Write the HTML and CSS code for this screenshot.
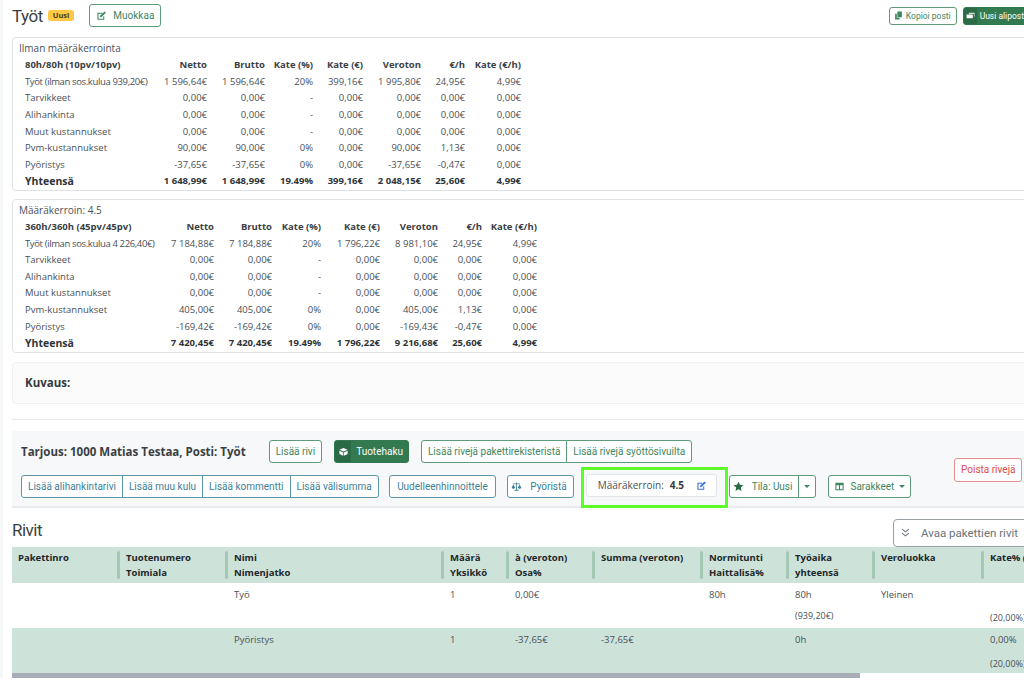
FILE: index.html
```html
<!DOCTYPE html>
<html lang="fi">
<head>
  <meta charset="UTF-8" />
  <title>Työt</title>
  <link rel="stylesheet" href="styles.css">
</head>
<body>
  <div class="page">
    <header class="post-head">
      <h1>Työt</h1>
      <span class="badge">Uusi</span>
      <button class="btn btn-green btn-edit">
        <svg class="ico" viewBox="0 0 16 16"><path d="M2 4h7v1.6H3.600v7h7V9H12v5H2z" fill="currentColor"/><path d="M6 8.200 12.400 2 14.400 4 8 10.200l-2.400.4z" fill="currentColor"/></svg>
        Muokkaa
      </button>
      <div class="head-right">
        <button class="btn btn-green btn-small">
          <svg class="ico-s" viewBox="0 0 16 16"><path d="M6 1h8v10H6z M2 5h3v7h5v3H2z" fill="currentColor"/></svg>
          Kopioi posti
        </button>
        <button class="btn btn-solid btn-small">
          <span class="ico-box box-small"><svg class="ico-s" viewBox="0 0 16 16"><path d="M5 3h10v7h-1V5H5z M1 6h11v7H1z" fill="currentColor"/></svg></span>
          Uusi aliposti
        </button>
      </div>
    </header>

    <section class="card">
      <div class="card-title">Ilman määräkerrointa</div>
      <table class="sum">
        <colgroup>
          <col class="w-130"><col class="w-58"><col class="w-58"><col class="w-48"><col class="w-50"><col class="w-58"><col class="w-44"><col class="w-56">
        </colgroup>
        <tr class="sum-head"><th>80h/80h (10pv/10pv)</th><th>Netto</th><th>Brutto</th><th>Kate (%)</th><th>Kate (€)</th><th>Veroton</th><th>€/h</th><th>Kate (€/h)</th></tr>
        <tr class="row-labor"><td>Työt (ilman sos.kulua 939,20€)</td><td>1 596,64€</td><td>1 596,64€</td><td>20%</td><td>399,16€</td><td>1 995,80€</td><td>24,95€</td><td>4,99€</td></tr>
        <tr><td>Tarvikkeet</td><td>0,00€</td><td>0,00€</td><td>-</td><td>0,00€</td><td>0,00€</td><td>0,00€</td><td>0,00€</td></tr>
        <tr><td>Alihankinta</td><td>0,00€</td><td>0,00€</td><td>-</td><td>0,00€</td><td>0,00€</td><td>0,00€</td><td>0,00€</td></tr>
        <tr><td>Muut kustannukset</td><td>0,00€</td><td>0,00€</td><td>-</td><td>0,00€</td><td>0,00€</td><td>0,00€</td><td>0,00€</td></tr>
        <tr><td>Pvm-kustannukset</td><td>90,00€</td><td>90,00€</td><td>0%</td><td>0,00€</td><td>90,00€</td><td>1,13€</td><td>0,00€</td></tr>
        <tr><td>Pyöristys</td><td>-37,65€</td><td>-37,65€</td><td>0%</td><td>0,00€</td><td>-37,65€</td><td>-0,47€</td><td>0,00€</td></tr>
        <tr class="sum-total"><td>Yhteensä</td><td>1 648,99€</td><td>1 648,99€</td><td>19.49%</td><td>399,16€</td><td>2 048,15€</td><td>25,60€</td><td>4,99€</td></tr>
      </table>
    </section>

    <section class="card">
      <div class="card-title">Määräkerroin: 4.5</div>
      <table class="sum">
        <colgroup>
          <col class="w-137"><col class="w-58"><col class="w-58"><col class="w-49"><col class="w-59"><col class="w-58"><col class="w-44"><col class="w-55">
        </colgroup>
        <tr class="sum-head"><th>360h/360h (45pv/45pv)</th><th>Netto</th><th>Brutto</th><th>Kate (%)</th><th>Kate (€)</th><th>Veroton</th><th>€/h</th><th>Kate (€/h)</th></tr>
        <tr class="row-labor"><td>Työt (ilman sos.kulua 4 226,40€)</td><td>7 184,88€</td><td>7 184,88€</td><td>20%</td><td>1 796,22€</td><td>8 981,10€</td><td>24,95€</td><td>4,99€</td></tr>
        <tr><td>Tarvikkeet</td><td>0,00€</td><td>0,00€</td><td>-</td><td>0,00€</td><td>0,00€</td><td>0,00€</td><td>0,00€</td></tr>
        <tr><td>Alihankinta</td><td>0,00€</td><td>0,00€</td><td>-</td><td>0,00€</td><td>0,00€</td><td>0,00€</td><td>0,00€</td></tr>
        <tr><td>Muut kustannukset</td><td>0,00€</td><td>0,00€</td><td>-</td><td>0,00€</td><td>0,00€</td><td>0,00€</td><td>0,00€</td></tr>
        <tr><td>Pvm-kustannukset</td><td>405,00€</td><td>405,00€</td><td>0%</td><td>0,00€</td><td>405,00€</td><td>1,13€</td><td>0,00€</td></tr>
        <tr><td>Pyöristys</td><td>-169,42€</td><td>-169,42€</td><td>0%</td><td>0,00€</td><td>-169,43€</td><td>-0,47€</td><td>0,00€</td></tr>
        <tr class="sum-total"><td>Yhteensä</td><td>7 420,45€</td><td>7 420,45€</td><td>19.49%</td><td>1 796,22€</td><td>9 216,68€</td><td>25,60€</td><td>4,99€</td></tr>
      </table>
    </section>

    <section class="desc"><strong>Kuvaus:</strong></section>

    <section class="toolbar">
      <div class="toolbar-rows">
        <div class="tool-row">
          <strong class="tool-title">Tarjous: 1000 Matias Testaa, Posti: Työt</strong>
          <button class="btn btn-green">Lisää rivi</button>
          <button class="btn btn-solid">
            <span class="ico-box"><svg class="ico" viewBox="0 0 16 16"><path d="M8 3 14 5.500 8 8 2 5.500z M2 7l5.500 2.300V14L2 11.500z M14 7 8.500 9.300V14L14 11.500z" fill="currentColor"/></svg></span>
            Tuotehaku
          </button>
          <div class="btn-group group-green">
            <button class="btn btn-green">Lisää rivejä pakettirekisteristä</button>
            <button class="btn btn-green">Lisää rivejä syöttösivuilta</button>
          </div>
        </div>
        <div class="tool-row row-low">
          <div class="btn-group group-blue">
            <button class="btn btn-blue">Lisää alihankintarivi</button>
            <button class="btn btn-blue">Lisää muu kulu</button>
            <button class="btn btn-blue">Lisää kommentti</button>
            <button class="btn btn-blue">Lisää välisumma</button>
          </div>
          <button class="btn btn-blue btn-reprice">Uudelleenhinnoittele</button>
          <button class="btn btn-blue btn-round">
            <svg class="ico" viewBox="0 0 16 16"><path d="M7.400 2h1.200v1.500H13v1.200H8.600v8H11V14H5v-1.300h2.400v-8H3V3.500h4.400z" fill="currentColor"/><path d="M3.500 5 1 9.500a2.600 2.600 0 0 0 5 0z M12.500 5 10 9.500a2.600 2.600 0 0 0 5 0z" fill="currentColor"/></svg>
            Pyöristä
          </button>
          <div class="highlight">
            <div class="multiplier">
              <span>Määräkerroin:</span>
              <b>4.5</b>
              <svg class="ico ico-edit" viewBox="0 0 16 16"><path d="M2 4h7v1.600H3.600v7h7V9H12v5H2z" fill="currentColor"/><path d="M6 8.200 12.400 2 14.400 4 8 10.200l-2.400.4z" fill="currentColor"/></svg>
            </div>
          </div>
          <div class="btn-group group-state">
            <button class="btn btn-green">
              <svg class="ico" viewBox="0 0 16 16"><path d="m8 1 2.100 4.600 5 .6-3.700 3.400 1 4.900L8 12.100l-4.400 2.400 1-4.900L.9 6.200l5-.6z" fill="#2a6b47"/></svg>
              Tila: Uusi
            </button>
            <button class="btn btn-green btn-caret"><span class="caret"></span></button>
          </div>
          <button class="btn btn-green btn-cols">
            <svg class="ico" viewBox="0 0 16 16"><path d="M2 2.500h12v11H2z M3.500 6v6h3.700V6z M8.800 6v6h3.700V6z" fill="currentColor" fill-rule="evenodd"/></svg>
            Sarakkeet
            <span class="caret"></span>
          </button>
        </div>
      </div>
      <button class="btn btn-red">Poista rivejä</button>
    </section>

    <div class="rows-head">
      <h2>Rivit</h2>
      <button class="btn-open">
        <svg class="ico" viewBox="0 0 16 16"><path d="m3 3 5 4 5-4M3 9l5 4 5-4" fill="none" stroke="currentColor" stroke-width="1.500"/></svg>
        Avaa pakettien rivit
      </button>
    </div>

    <table class="rows">
      <colgroup>
        <col class="c-108"><col class="c-108"><col class="c-216"><col class="c-65"><col class="c-86"><col class="c-108"><col class="c-86"><col class="c-86"><col class="c-109"><col class="c-86">
      </colgroup>
      <tr>
        <th>Pakettinro</th>
        <th>Tuotenumero<br>Toimiala</th>
        <th>Nimi<br>Nimenjatko</th>
        <th>Määrä<br>Yksikkö</th>
        <th>à (veroton)<br>Osa%</th>
        <th>Summa (veroton)</th>
        <th>Normitunti<br>Haittalisä%</th>
        <th>Työaika<br>yhteensä</th>
        <th>Veroluokka</th>
        <th>Kate% (veroton)</th>
      </tr>
      <tr>
        <td></td><td></td><td>Työ</td><td>1</td><td>0,00€</td><td></td><td>80h</td>
        <td>80h<small>(939,20€)</small></td><td>Yleinen</td><td><small class="low">(20,00%)</small></td>
      </tr>
      <tr class="row-green">
        <td></td><td></td><td>Pyöristys</td><td>1</td><td>-37,65€</td><td>-37,65€</td><td></td>
        <td>0h</td><td></td><td>0,00%<small>(20,00%)</small></td>
      </tr>
    </table>
    <div class="scrollbar"></div>
  </div>
</body>
</html>
```

FILE: styles.css
```css
html, body {
  margin: 0;
  height: 695px;
  overflow: hidden;
  background: #fff;
}
body {
  font-family: 'Open Sans', sans-serif;
  font-size: 9.5px;
  color: #495057;
}
.page {
  width: 1130px;
  padding: 0 0 0 9px;
  box-sizing: border-box;
  border-left: 3px solid #f6f7f7;
}
.post-head {
  display: flex;
  align-items: center;
  width: 1020px;
  height: 37px;
  padding-bottom: 6px;
  box-sizing: border-box;
}
.post-head h1 {
  margin: 0;
  font-family: 'Roboto', sans-serif;
  font-weight: 400;
  font-size: 17px;
  letter-spacing: -0.5px;
  color: #3a3f44;
}
.badge {
  margin-left: 5px;
  padding: 0 5px;
  background: #ffc845;
  border-radius: 3px;
  font-size: 7.5px;
  line-height: 11px;
  font-weight: 700;
  color: #4a3c10;
}
.btn-edit {
  margin-left: 15px;
  height: 22px;
  padding: 0 5px 0 4px;
  gap: 5px;
}
.head-right {
  display: flex;
  gap: 6px;
  margin-left: auto;
}
.btn {
  display: inline-flex;
  align-items: center;
  gap: 6px;
  height: 23px;
  padding: 0 6px;
  background: #fff;
  border: 1px solid;
  border-radius: 3px;
  font-family: 'Roboto', sans-serif;
  font-size: 10px;
  white-space: nowrap;
}
.btn-green {
  border-color: #5d9b7b;
  color: #3f8560;
}
.btn-solid {
  padding: 0 5px 0 0;
  gap: 5px;
  background: #337a50;
  border-color: #337a50;
  color: #fff;
  overflow: hidden;
}
.ico-box {
  display: flex;
  align-items: center;
  justify-content: center;
  align-self: stretch;
  width: 16px;
  background: #2a6a44;
}
.box-small {
  width: 13px;
}
.btn-blue {
  border-color: #5a97ad;
  color: #3d7f99;
}
.btn-red {
  height: 24px;
  margin-top: 18px;
  border-color: #e78f8f;
  color: #dc4c4c;
}
.btn-small {
  height: 18px;
  padding: 0 5px 0 4px;
  gap: 3px;
  font-size: 8.5px;
}
.btn-small.btn-solid {
  padding-left: 0;
}
.ico {
  width: 11px;
  height: 11px;
  flex: none;
}
.ico-s {
  width: 9px;
  height: 9px;
  flex: none;
}
.card {
  width: 1100px;
  box-sizing: border-box;
  margin-bottom: 8px;
  padding: 3px 6px 0;
  border: 1px solid #dfe3e6;
  border-radius: 4px;
}
.card-title {
  font-size: 10px;
  line-height: 15px;
}
.sum {
  border-collapse: collapse;
  margin-top: 1px;
}
.w-130 { width: 130px; }
.w-137 { width: 137px; }
.w-44 { width: 44px; }
.w-48 { width: 48px; }
.w-49 { width: 49px; }
.w-50 { width: 50px; }
.w-55 { width: 55px; }
.w-56 { width: 56px; }
.w-58 { width: 58px; }
.w-59 { width: 59px; }
.sum th, .sum td {
  height: 16.6px;
  padding: 0;
  text-align: right;
  font-size: 9.5px;
  line-height: 12px;
  white-space: nowrap;
}
.sum th:first-child, .sum td:first-child {
  padding-left: 6px;
  text-align: left;
}
.row-labor td:first-child {
  letter-spacing: -0.37px;
}
.sum-head th {
  font-weight: 700;
  color: #3a3f44;
}
.sum-total td {
  font-weight: 700;
  color: #2f3438;
}
.sum-total td:first-child {
  font-size: 10.5px;
}
.desc {
  width: 1100px;
  box-sizing: border-box;
  height: 42px;
  margin-top: 9px;
  padding: 0 12px;
  display: flex;
  align-items: center;
  background: #fbfbfb;
  border: 1px solid #eef0f1;
  border-radius: 4px;
  font-size: 11.5px;
  color: #343a40;
}
.toolbar {
  width: 1100px;
  box-sizing: border-box;
  height: 89px;
  margin-top: 15px;
  padding: 20px 0 0 9px;
  display: flex;
  align-items: flex-start;
  background: linear-gradient(#fff 11px, #f6f8f9 11px);
  border-top: 1px solid #e6e8ea;
  border-bottom: 2px solid #e9ebec;
}
.toolbar-rows {
  display: flex;
  flex-direction: column;
  width: 933px;
}
.tool-row {
  display: flex;
  align-items: center;
  height: 23px;
}
.row-low {
  align-items: flex-start;
  height: 41px;
  margin-top: 4px;
}
.row-low > .btn, .row-low > .btn-group {
  margin-top: 8px;
}
.tool-title {
  font-size: 11.5px;
  color: #3a3f44;
  margin-right: 23px;
}
.tool-row > .btn-solid {
  margin-left: 12px;
}
.group-green {
  margin-left: 12px;
}
.btn-group {
  display: inline-flex;
}
.btn-group .btn {
  border-radius: 0;
}
.btn-group .btn + .btn {
  margin-left: -1px;
}
.btn-group .btn:first-child {
  border-radius: 3px 0 0 3px;
}
.btn-group .btn:last-child {
  border-radius: 0 3px 3px 0;
}
.btn-reprice {
  margin-left: 10px;
  padding: 0 7.5px;
}
.btn-round {
  margin-left: 11px;
  padding: 0 6px 0 3px;
  gap: 8px;
}
.highlight {
  margin-left: 7px;
  width: 147px;
  height: 41px;
  box-sizing: border-box;
  padding: 4px 8px 7px 2px;
  border: 3px solid #5dfb2c;
}
.multiplier {
  display: flex;
  align-items: center;
  height: 23px;
  padding: 0 6px 0 11px;
  box-sizing: border-box;
  background: #fff;
  border: 1px solid #e2e5e8;
  border-radius: 3px;
  font-size: 10px;
}
.multiplier b {
  margin-left: 6px;
  color: #343a40;
}
.ico-edit {
  margin-left: auto;
  margin-right: 3px;
  color: #3b72e0;
}
.group-state {
  margin-left: 1px;
}
.group-state .btn:first-child {
  padding: 0 6px 0 3px;
  gap: 8px;
}
.btn-caret {
  padding: 0 5px;
}
.caret {
  width: 0;
  height: 0;
  border-left: 3px solid transparent;
  border-right: 3px solid transparent;
  border-top: 3px solid currentColor;
}
.btn-cols {
  margin-left: 12px;
  padding: 0 5px;
  gap: 5px;
}
.rows-head {
  display: flex;
  align-items: center;
  width: 1041px;
  height: 39px;
}
.rows-head h2 {
  margin: 6px 0 0;
  font-family: 'Roboto', sans-serif;
  font-weight: 400;
  font-size: 17px;
  letter-spacing: -0.5px;
  color: #3a3f44;
}
.btn-open {
  display: inline-flex;
  align-items: center;
  gap: 10px;
  height: 28px;
  width: 160px;
  margin: 11px 0 0 auto;
  padding: 0 6px;
  background: #fff;
  border: 1px solid #9aa0a6;
  border-radius: 4px;
  font-family: 'Roboto', sans-serif;
  font-size: 11.5px;
  color: #6c7379;
}
.rows {
  border-collapse: collapse;
  table-layout: fixed;
  width: 1048px;
}
.c-108 { width: 108px; }
.c-216 { width: 216px; }
.c-65 { width: 65px; }
.c-86 { width: 86px; }
.c-109 { width: 109px; }
.rows th {
  position: relative;
  height: 36px;
  padding: 3px 6px 0;
  box-sizing: border-box;
  vertical-align: top;
  text-align: left;
  background: #cde2d9;
  font-size: 9.5px;
  line-height: 15px;
  color: #212529;
  white-space: nowrap;
}
.rows th:not(:last-child)::after {
  content: "";
  position: absolute;
  top: 4px;
  bottom: 4px;
  right: 0;
  width: 3px;
  border-radius: 2px;
  background: #a3c9b5;
}
.rows td {
  height: 45px;
  padding: 5px 6px 0;
  box-sizing: border-box;
  vertical-align: top;
  font-size: 9.5px;
  line-height: 13px;
  white-space: nowrap;
}
.rows small {
  display: block;
  margin-top: 8px;
  font-size: 9px;
}
.rows small.low {
  margin-top: 23px;
}
.row-green td {
  background: #cde2d9;
}
.row-green small {
  margin-top: 11px;
}
.scrollbar {
  width: 848px;
  height: 5px;
  background: #a9adb8;
}
```
